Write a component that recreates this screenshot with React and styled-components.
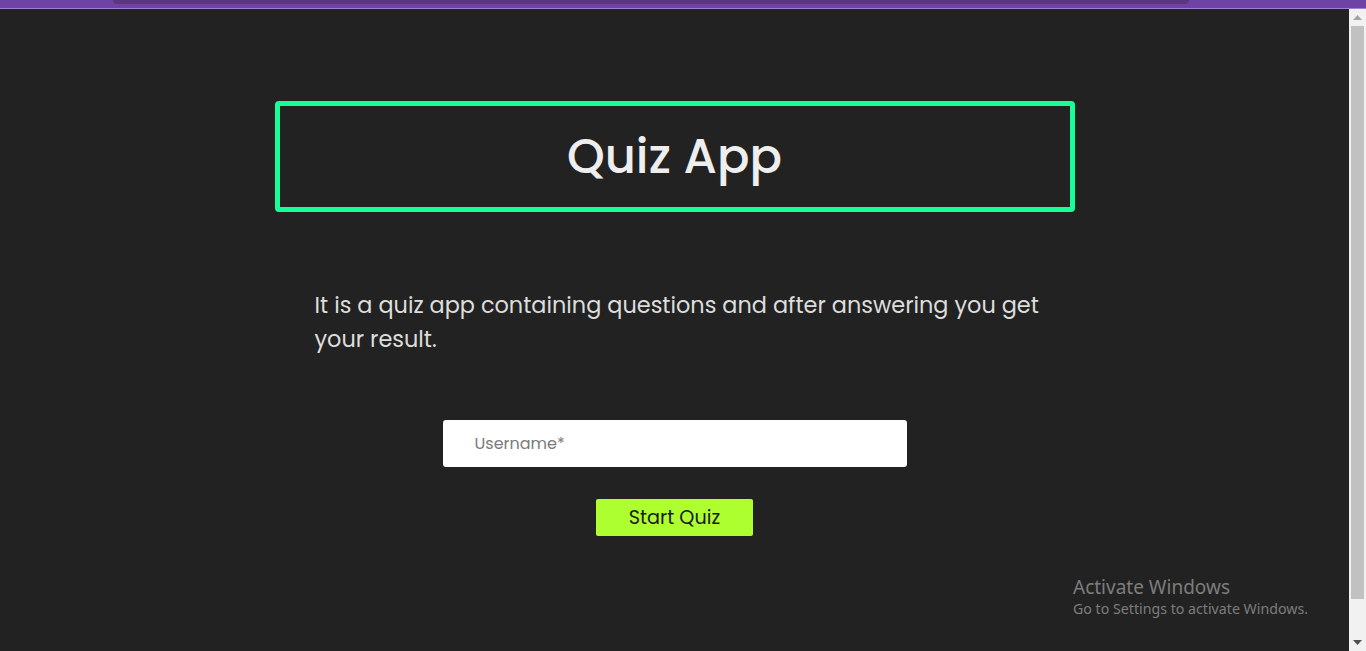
import React from "react";
import styled, { createGlobalStyle } from "styled-components";

const GlobalStyle = createGlobalStyle`
  html, body {
    margin: 0;
    padding: 0;
    height: 100%;
    overflow: hidden;
    background: #222222;
  }
  #root { height: 100%; }
  * { box-sizing: border-box; }
`;

const FONT = `Poppins, Inter, "Noto Sans", sans-serif`;

const Window = styled.div`
  display: flex;
  flex-direction: column;
  height: 100vh;
`;

const TopBar = styled.div`
  flex: 0 0 9px;
  display: flex;
  align-items: flex-start;
  background: #6e43a5;
  border-bottom: 1px solid #a07fd0;
  padding-left: 113px;
`;

const TabStrip = styled.div`
  width: 1076px;
  height: 4px;
  background: #5a377f;
  border-radius: 0 0 8px 8px;
`;

const Body = styled.div`
  flex: 1;
  display: flex;
  min-height: 0;
`;

const Main = styled.main`
  position: relative;
  flex: 1;
  display: flex;
  flex-direction: column;
  align-items: center;
  background: #222222;
  font-family: ${FONT};
`;

const TitleBox = styled.header`
  width: 800px;
  height: 111px;
  margin-top: 92px;
  border: 5px solid #17ff98;
  border-radius: 4px;
  display: flex;
  align-items: center;
  justify-content: center;
`;

const Title = styled.h1`
  margin: 0;
  color: #eeeeee;
  font-size: 48px;
  font-weight: 500;
`;

const Description = styled.p`
  width: 740px;
  margin: 76px 0 0 20px;
  color: #dddddd;
  font-size: 22.4px;
  line-height: 34px;
`;

const Form = styled.form`
  display: flex;
  flex-direction: column;
  align-items: center;
  margin-top: 64px;
`;

const Input = styled.input`
  width: 464px;
  height: 47px;
  border: none;
  border-radius: 3px;
  background: #ffffff;
  padding: 0 32px;
  font-family: ${FONT};
  font-size: 16px;
  color: #333;
  outline: none;
  &::placeholder { color: #7a7a7a; }
`;

const StartButton = styled.button`
  margin-top: 32px;
  width: 157px;
  height: 37px;
  border: none;
  border-radius: 2px;
  background: #adff2f;
  color: #1a1a1a;
  font-family: ${FONT};
  font-size: 19.2px;
  cursor: pointer;
`;

const Watermark = styled.div`
  position: absolute;
  left: 1073px;
  top: 566px;
  font-family: "Noto Sans", "Open Sans", sans-serif;
  color: #7d7d7d;
`;

const WatermarkTitle = styled.div`
  font-size: 19px;
  line-height: 24px;
`;

const WatermarkText = styled.div`
  font-size: 14.2px;
  line-height: 20px;
`;

const ScrollBar = styled.div`
  flex: 0 0 17px;
  display: flex;
  flex-direction: column;
  align-items: center;
  background: #f1f1f1;
`;

const Arrow = styled.div`
  flex: 0 0 17px;
  display: flex;
  align-items: center;
  justify-content: center;
`;

const Thumb = styled.div`
  width: 13px;
  height: 573px;
  background: #c1c1c1;
`;

const Track = styled.div`
  flex: 1;
  display: flex;
  flex-direction: column;
  align-items: center;
`;

export default function App() {
  return (
    <Window>
      <GlobalStyle />
      <TopBar>
        <TabStrip />
      </TopBar>
      <Body>
        <Main>
          <TitleBox>
            <Title>Quiz App</Title>
          </TitleBox>
          <Description>
            It is a quiz app containing questions and after answering you get your result.
          </Description>
          <Form onSubmit={(e) => e.preventDefault()}>
            <Input placeholder="Username*" />
            <StartButton type="submit">Start Quiz</StartButton>
          </Form>
          <Watermark>
            <WatermarkTitle>Activate Windows</WatermarkTitle>
            <WatermarkText>Go to Settings to activate Windows.</WatermarkText>
          </Watermark>
        </Main>
        <ScrollBar>
          <Arrow>
            <svg width="9" height="5" viewBox="0 0 9 5"><path d="M4.5 0L9 5H0z" fill="#a3a3a3" /></svg>
          </Arrow>
          <Track>
            <Thumb />
          </Track>
          <Arrow>
            <svg width="9" height="5" viewBox="0 0 9 5"><path d="M0 0h9L4.5 5z" fill="#505050" /></svg>
          </Arrow>
        </ScrollBar>
      </Body>
    </Window>
  );
}
